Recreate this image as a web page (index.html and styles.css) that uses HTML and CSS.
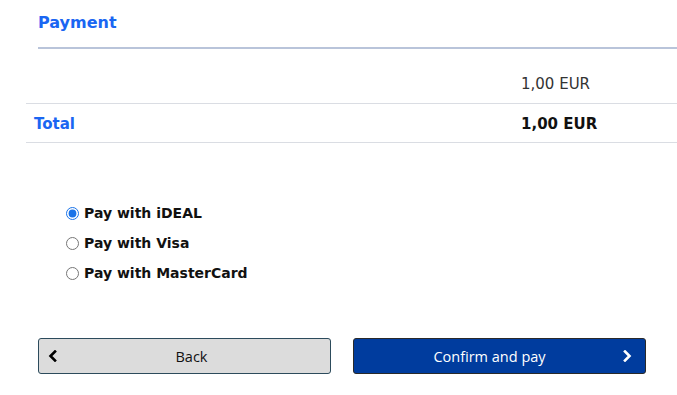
FILE: index.html
```html
<!DOCTYPE html>
<html>
<head>
<meta charset="utf-8">
<link rel="stylesheet" href="styles.css">
</head>
<body>
<div class="page">
  <div class="heading"><h2>Payment</h2></div>
  <div class="summary">
    <div class="row">
      <span class="label"></span>
      <span class="amount">1,00 EUR</span>
    </div>
    <div class="row total">
      <span class="label">Total</span>
      <span class="amount">1,00 EUR</span>
    </div>
  </div>
  <form class="methods">
    <label class="method"><input type="radio" name="pm" checked><span>Pay with iDEAL</span></label>
    <label class="method"><input type="radio" name="pm"><span>Pay with Visa</span></label>
    <label class="method"><input type="radio" name="pm"><span>Pay with MasterCard</span></label>
  </form>
  <div class="actions">
    <button class="btn back" type="button">
      <svg class="chev" width="10" height="12" viewBox="0 0 10 12"><path d="M7 1.5 L2.5 6 L7 10.5" fill="none" stroke="#000" stroke-width="2.6" stroke-linecap="square" stroke-linejoin="miter"/></svg>
      <span>Back</span>
    </button>
    <button class="btn confirm" type="button">
      <span>Confirm and pay</span>
      <svg class="chev" width="10" height="12" viewBox="0 0 10 12"><path d="M3 1.5 L7.5 6 L3 10.5" fill="none" stroke="#fff" stroke-width="2.6" stroke-linecap="square" stroke-linejoin="miter"/></svg>
    </button>
  </div>
</div>
</body>
</html>
```
FILE: styles.css
```css
html, body {
  margin: 0;
  padding: 0;
  background: #fff;
}
body {
  font-family: "DejaVu Sans", Verdana, sans-serif;
  color: #222;
}
.page {
  width: 677px;
  height: 395px;
  overflow: hidden;
}
.heading {
  margin-left: 38px;
  border-bottom: 2px solid #b9c4da;
  height: 47px;
}
.heading h2 {
  margin: 0;
  padding-top: 14px;
  font-size: 16px;
  line-height: 18px;
  font-weight: bold;
  color: #1a66f2;
}
.summary {
  margin-left: 26px;
  margin-top: 16px;
}
.row {
  display: flex;
  align-items: center;
  height: 38px;
  border-bottom: 1px solid #dadde3;
}
.row .label {
  width: 487px;
  padding-left: 8px;
  font-size: 15px;
  font-weight: bold;
  color: #1a66f2;
}
.row .amount {
  font-size: 15px;
  color: #333;
}
.row.total .amount {
  font-weight: bold;
  color: #111;
}
.row.total .label,
.row.total .amount {
  padding-top: 1px;
}
.methods {
  display: flex;
  flex-direction: column;
  gap: 12px;
  margin: 61px 0 0 65px;
}
.method {
  display: flex;
  align-items: center;
  height: 18px;
  font-size: 14px;
  font-weight: bold;
  color: #111;
}
.method input {
  margin: 0 5px 0 1px;
  width: 13px;
  height: 13px;
  accent-color: #1a73e8;
}
.actions {
  display: flex;
  gap: 22px;
  margin: 56px 0 0 38px;
}
.btn {
  width: 293px;
  height: 36px;
  border-radius: 3px;
  font-family: "Open Sans", sans-serif;
  font-size: 14.5px;
  display: flex;
  align-items: center;
  justify-content: center;
  position: relative;
  padding: 0;
  cursor: pointer;
}
.btn .chev {
  position: absolute;
  top: 11px;
}
.back {
  background: #dcdcdc;
  border: 1px solid #2c4b5c;
  color: #111;
  padding-left: 14px;
}
.back .chev {
  left: 9px;
}
.confirm {
  background: #003c9e;
  border: 1px solid #2a2a2a;
  color: #fff;
  padding-right: 20px;
}
.confirm .chev {
  right: 13px;
}
```
